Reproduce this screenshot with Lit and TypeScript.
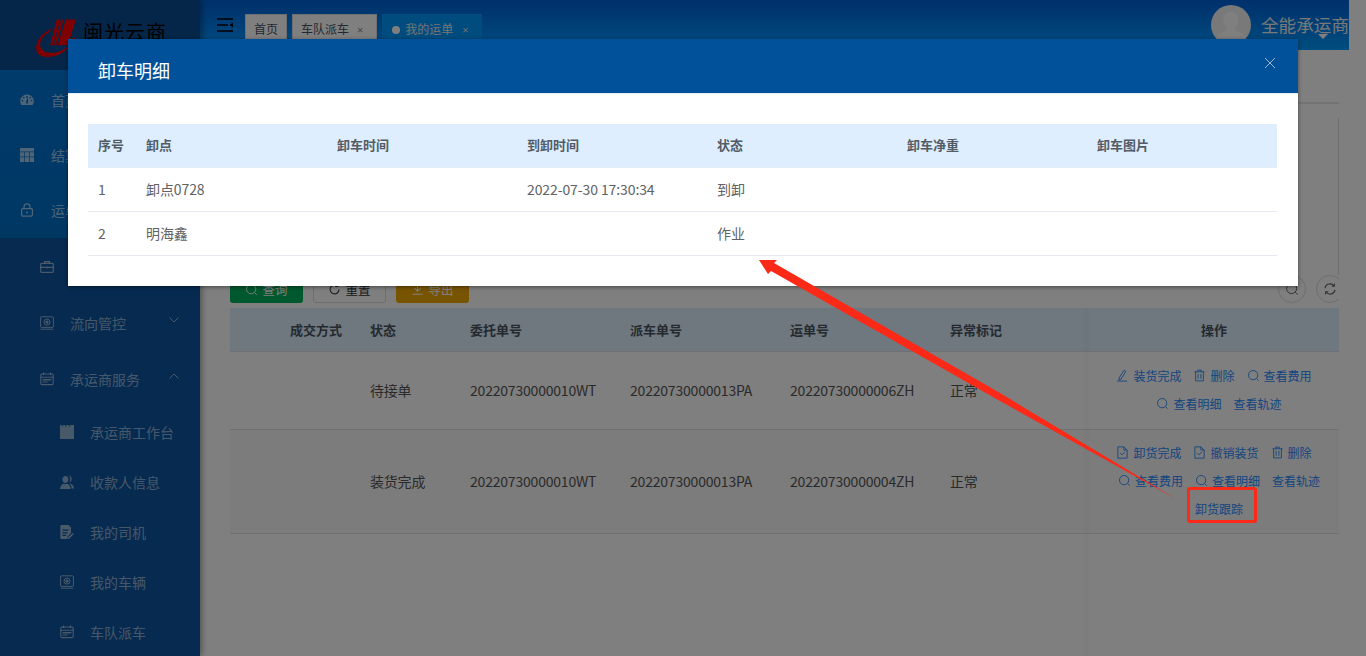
import { LitElement, css, html, svg, type TemplateResult } from "lit";
import { customElement } from "lit/decorators.js";

const icons: Record<string, TemplateResult> = {
  gauge: svg`<path fill="currentColor" d="M7 1.5a6.8 6.8 0 0 0-6.8 6.8c0 1.5.4 2.7 1.2 3.7h11.2c.8-1 1.2-2.2 1.2-3.7A6.8 6.8 0 0 0 7 1.5zm-4.6 7a.9.9 0 1 1 0-1.8.9.9 0 0 1 0 1.8zm1.4-3a.9.9 0 1 1 0-1.8.9.9 0 0 1 0 1.8zM7 3.1a.9.9 0 1 1 0 1.8.9.9 0 0 1 0-1.8zm1 7.4H6l.4-3 1.6-3 .2 3.4zm2.2-5a.9.9 0 1 1 0-1.8.9.9 0 0 1 0 1.8zm1.4 3a.9.9 0 1 1 0-1.8.9.9 0 0 1 0 1.8z"/>`,
  grid: svg`<path fill="currentColor" d="M0 0h14v3.400H0zM0 4.200h4.200v4.300H0zM4.900 4.200h4.200v4.300H4.900zM9.800 4.200H14v4.300H9.800zM0 9.300h4.200V14H0zM4.900 9.300h4.200V14H4.900zM9.800 9.300H14V14H9.800z"/>`,
  lock: svg`<g fill="none" stroke="currentColor" stroke-width="1.2"><rect x="1.6" y="5.6" width="10.8" height="7.6" rx="1.2"/><path d="M4 5.6V3.8a3 3 0 0 1 6 0v1.8"/></g><circle cx="7" cy="9.4" r="1" fill="currentColor"/>`,
  case: svg`<g fill="none" stroke="currentColor" stroke-width="1.2"><rect x=".7" y="3.4" width="12.6" height="9" rx=".8"/><path d="M4.6 3.4V1.6h4.8v1.8M.7 7.4h12.6M7 6.4v2.2"/></g>`,
  safe: svg`<g fill="none" stroke="currentColor" stroke-width="1"><rect x=".6" y=".8" width="12.8" height="10.6" rx="1"/><path d="M.6 13.2h12.8"/><circle cx="7" cy="6.1" r="3"/></g><circle cx="7" cy="6.1" r="1.6" fill="currentColor"/>`,
  card: svg`<g fill="none" stroke="currentColor" stroke-width="1.1"><rect x=".8" y="2" width="12.4" height="10.6" rx="1.2"/><path d="M.8 5.2h12.4M3.6.6v2.4M10.4.6v2.4"/></g><path fill="currentColor" d="M2.6 7h8.8v1.4H2.6zM2.6 9.4h5v1.2h-5z"/>`,
  note: svg`<path fill="currentColor" d="M0 0h1.800v1.600h1V0h2.500v1.600h1V0h2.500v1.600h1V0H14v14H0z"/>`,
  users: svg`<path fill="currentColor" d="M5.400 1c1.700 0 3 1.500 3 3.500S7.100 8 5.400 8 2.400 6.500 2.400 4.500 3.700 1 5.400 1zM0 14c0-3 2-4.800 3.800-5.200.9.600 2.300.6 3.200 0 1.800.4 3.600 2.200 3.600 5.200zM8.600.600c1.700 0 3 1.500 3 3.500 0 1.600-.9 3-2.100 3.300.4-.8.700-1.800.7-2.900 0-1.500-.5-2.900-1.600-3.900zM9 8.300c2.400.2 5 2 5 5.200h-2.400c0-2-1-3.900-2.600-5.200z"/>`,
  doc: svg`<path fill="currentColor" d="M1.500 0h7L11 2.500V8L7.600 11.500 7.300 14H1.500A1.200 1.200 0 0 1 .3 12.800V1.200A1.200 1.200 0 0 1 1.500 0zm1 4.500v1.200h6V4.500zm0 2.700v1.200h5V7.200zm0 2.600V11h3.500V9.800z"/><path fill="currentColor" d="M12.600 7.900l1.200 1.200-4.600 4.600-1.600.3.400-1.500z"/>`,
  edit: svg`<g fill="none" stroke="currentColor" stroke-width="1"><path d="M3.400 9.600 8.600 1.400l2 1.200-5.200 8.400-2.200.9zM1 13h11"/></g>`,
  trash: svg`<g fill="none" stroke="currentColor" stroke-width="1"><path d="M1.500 3h11M5 3V1.200h4V3M2.800 3v9.800h8.400V3M5.500 5.200v5.400M8.500 5.200v5.400"/></g>`,
  search: svg`<g fill="none" stroke="currentColor" stroke-width="1"><circle cx="6.600" cy="6.600" r="5"/><path d="m10.200 10.200 2.400 2.400"/></g>`,
  check: svg`<g fill="none" stroke="currentColor" stroke-width="1"><path d="M2 .9h6.500L12 4.400v8.700H2z"/><path d="M8.500.9v3.500H12M4.600 7.800l1.800 1.800 3-3.200"/></g>`,
  reset: svg`<path fill="none" stroke="currentColor" stroke-width="1.200" d="M11.800 7A4.800 4.800 0 1 1 10 3.200M10.400 1v2.600H7.800"/>`,
  refresh: svg`<path fill="none" stroke="currentColor" stroke-width="1.100" d="M2 6.200A5 5 0 0 1 11 4M12 7.800A5 5 0 0 1 3 10M11.400 1.600V4.200H8.800M2.600 12.400V9.800h2.600"/>`,
  down: svg`<path fill="none" stroke="currentColor" stroke-width="1.100" d="M7 1v7.600M3.800 5.600 7 8.800l3.200-3.200M1.500 12.200h11"/>`,
};

const icon = (name: string) => html`<svg class="ic" viewBox="0 0 14 14">${icons[name]}</svg>`;

type Op = { label: string; ic?: string };

const orders = [
  {
    status: "待接单",
    entrust: "20220730000010WT",
    dispatch: "20220730000013PA",
    waybill: "20220730000006ZH",
    flag: "正常",
    ops: [
      [
        { label: "装货完成", ic: "edit" },
        { label: "删除", ic: "trash" },
        { label: "查看费用", ic: "search" },
      ],
      [{ label: "查看明细", ic: "search" }, { label: "查看轨迹" }],
    ] as Op[][],
  },
  {
    status: "装货完成",
    entrust: "20220730000010WT",
    dispatch: "20220730000013PA",
    waybill: "20220730000004ZH",
    flag: "正常",
    ops: [
      [
        { label: "卸货完成", ic: "check" },
        { label: "撤销装货", ic: "check" },
        { label: "删除", ic: "trash" },
      ],
      [
        { label: "查看费用", ic: "search" },
        { label: "查看明细", ic: "search" },
        { label: "查看轨迹" },
      ],
      [{ label: "卸货跟踪" }],
    ] as Op[][],
  },
];

@customElement("app-root")
export class AppRoot extends LitElement {
  private navTop(ic: string, label: string) {
    return html`<div class="nav-top">${icon(ic)}<span>${label}</span></div>`;
  }

  private navSub(ic: string, label: string, arrow: string) {
    return html`<div class="nav-sub">
      ${icon(ic)}<span>${label}</span>
      ${arrow
        ? html`<svg class="chev" viewBox="0 0 10 6">
            <path d=${arrow} fill="none" stroke="currentColor" stroke-width="1" />
          </svg>`
        : ""}
    </div>`;
  }

  private navLeaf(ic: string, label: string) {
    return html`<div class="nav-leaf">${icon(ic)}<span>${label}</span></div>`;
  }

  private renderSidebar() {
    return html`<aside>
      <div class="logo">
        <svg class="mark" viewBox="0 0 50 50">
          <path fill="#f00" d="M29 6h4l-8 28h-3zM34 6h2.500l-8 28H26zM39 6h11l-9 28H30z" />
          <path fill="#f00" d="M23 16C13 21 5 30 7 40c2 8 16 9 28 2 6-4 10-8 12-13-5 7-13 12-21 13-9 1-15-2-15-9 0-5 5-11 11-14z" />
          <circle cx="48" cy="29" r="3.500" fill="#f00" />
        </svg>
        <span class="brand">闽光云商</span>
      </div>
      <div class="nav-head">
        ${this.navTop("gauge", "首页")} ${this.navTop("grid", "结算管理")}
        ${this.navTop("lock", "运单管理")}
      </div>
      <div class="nav-body">
        ${this.navSub("case", "我的运单", "")}
        ${this.navSub("safe", "流向管控", "M.5.5 5 5 9.500.5")}
        ${this.navSub("card", "承运商服务", "M.5 5.500 5 1l4.500 4.500")}
        ${this.navLeaf("note", "承运商工作台")} ${this.navLeaf("users", "收款人信息")}
        ${this.navLeaf("doc", "我的司机")} ${this.navLeaf("safe", "我的车辆")}
        ${this.navLeaf("card", "车队派车")}
      </div>
    </aside>`;
  }

  private renderTopbar() {
    return html`<header>
      <svg class="burger" viewBox="0 0 16 14">
        <path d="M0 1h16M0 7h11M0 13h16" stroke="#000" stroke-width="1.600" fill="none" />
        <path d="M16 4.500v5L12.500 7z" fill="#000" />
      </svg>
      <div class="tab">首页</div>
      <div class="tab">车队派车<span class="x">×</span></div>
      <div class="tab active"><i class="dot"></i>我的运单<span class="x">×</span></div>
      <div class="user">
        <svg class="avatar" viewBox="0 0 40 40">
          <circle cx="20" cy="20" r="20" fill="#f2f2f2" />
          <path fill="#fff" d="M20 7c4.500 0 7.500 3.500 7.500 8 0 3.500-1.500 6.500-3.500 8v2c2 2 9 3 11 8a20 20 0 0 1-30 0c2-5 9-6 11-8v-2c-2-1.500-3.500-4.500-3.500-8 0-4.500 3-8 7.500-8z" />
        </svg>
        <span class="uname">全能承运商</span>
        <i class="caret"></i>
      </div>
    </header>`;
  }

  private renderOps(lines: Op[][]) {
    return lines.map(
      (line, i) => html`<div class="op-line ${i > 0 ? "shifted" : ""}">
        ${line.map(
          (op) => html`<span class="op">${op.ic ? icon(op.ic) : ""}${op.label}</span>`,
        )}
      </div>`,
    );
  }

  private renderOrders() {
    return html`<div class="orders">
      <div class="o-row o-head">
        <div class="first">成交方式</div>
        <div>状态</div>
        <div>委托单号</div>
        <div>派车单号</div>
        <div>运单号</div>
        <div>异常标记</div>
        <div class="ops-h">操作</div>
      </div>
      ${orders.map(
        (o, i) => html`<div class="o-row body ${i === 0 ? "r1" : "r2"}">
          <div></div>
          <div>${o.status}</div>
          <div>${o.entrust}</div>
          <div>${o.dispatch}</div>
          <div>${o.waybill}</div>
          <div>${o.flag}</div>
          <div class="ops">${this.renderOps(o.ops)}</div>
        </div>`,
      )}
      <div class="shade"></div>
    </div>`;
  }

  private renderModal() {
    return html`<section class="modal">
      <div class="m-head">
        <span class="m-title">卸车明细</span>
        <svg class="close" viewBox="0 0 12 12">
          <path d="M1 1l10 10M11 1 1 11" stroke="currentColor" stroke-width="1" fill="none" />
        </svg>
      </div>
      <div class="m-body">
        <div class="m-row m-th">
          <div>序号</div>
          <div>卸点</div>
          <div>卸车时间</div>
          <div>到卸时间</div>
          <div>状态</div>
          <div>卸车净重</div>
          <div>卸车图片</div>
        </div>
        <div class="m-row">
          <div>1</div>
          <div>卸点0728</div>
          <div></div>
          <div>2022-07-30 17:30:34</div>
          <div>到卸</div>
          <div></div>
          <div></div>
        </div>
        <div class="m-row">
          <div>2</div>
          <div>明海鑫</div>
          <div></div>
          <div></div>
          <div>作业</div>
          <div></div>
          <div></div>
        </div>
      </div>
    </section>`;
  }

  render(): TemplateResult {
    return html`<div class="page">
        ${this.renderSidebar()}
        <div class="main">
          ${this.renderTopbar()}
          <div class="content">
            <div class="strip"></div>
            <div class="filter"></div>
            <div class="toolbar">
              <button class="btn green">${icon("search")}查询</button>
              <button class="btn plain">${icon("reset")}重置</button>
              <button class="btn amber">${icon("down")}导出</button>
              <span class="grow"></span>
              <button class="round">${icon("search")}</button>
              <button class="round last">${icon("refresh")}</button>
            </div>
            ${this.renderOrders()}
          </div>
        </div>
      </div>
      <div class="mask"></div>
      ${this.renderModal()}
      <svg class="callout" viewBox="0 0 1366 656">
        <path fill="#fb2a18" d="M759 260 777 260 774 263 1000 393 1176 499 1000 401 771 271 768 274z" />
      </svg>
      <div class="redbox"></div>`;
  }

  static styles = css`
    :host {
      display: block;
      position: relative;
      width: 1366px;
      height: 656px;
      overflow: hidden;
      background: #fff;
      font-family: "Noto Sans CJK SC", "Open Sans", sans-serif;
      font-size: 14px;
      letter-spacing: -0.1px;
      color: #606266;
    }

    .ic {
      width: 14px;
      height: 14px;
      flex: none;
    }

    .page {
      display: flex;
      height: 656px;
    }

    aside {
      width: 200px;
      flex: none;
      background: #0c54a0;
      box-shadow: 2px 0 6px rgba(0, 0, 0, 0.35);
      position: relative;
      font-size: 14px;
      letter-spacing: 0;
      color: rgba(255, 255, 255, 0.55);
    }

    .logo {
      height: 70px;
      background: #0a4c90;
      display: flex;
      align-items: center;
      padding-left: 30px;
      gap: 4px;
      box-sizing: border-box;
    }

    .mark {
      width: 46px;
      height: 46px;
      flex: none;
      margin-top: 3px;
    }

    .brand {
      color: #000;
      font-size: 20px;
      letter-spacing: 1px;
      margin-left: 3px;
      margin-bottom: 8px;
    }

    .nav-head {
      height: 168px;
      box-sizing: border-box;
      padding-top: 2px;
      background: linear-gradient(#0076d8, #0070c8);
      color: rgba(255, 255, 255, 0.62);
    }

    .nav-top {
      height: 55.3px;
      display: flex;
      align-items: center;
      padding-left: 20px;
      gap: 17px;
    }

    .nav-body {
      padding-top: 1px;
    }

    .nav-sub {
      height: 56px;
      display: flex;
      align-items: center;
      padding-left: 40px;
      gap: 16px;
      position: relative;
    }

    .chev {
      width: 10px;
      height: 6px;
      position: absolute;
      left: 169px;
      top: 22px;
    }

    .nav-leaf {
      height: 50px;
      display: flex;
      align-items: center;
      padding-left: 60px;
      gap: 16px;
    }

    .main {
      width: 1149px;
      flex: none;
      display: flex;
      flex-direction: column;
    }

    header {
      height: 50px;
      flex: none;
      background: linear-gradient(#0060d8, #009cff);
      display: flex;
      align-items: flex-start;
      box-sizing: border-box;
      padding: 14px 0 0 17px;
      overflow: hidden;
    }

    .burger {
      width: 16px;
      height: 14px;
      margin: 4px 12px 0 0;
      flex: none;
    }

    .tab {
      height: 36px;
      box-sizing: border-box;
      margin-right: 5px;
      padding: 0 8px;
      background: #fff;
      border: 1px solid #dcdfe6;
      font-size: 12px;
      letter-spacing: 0;
      line-height: 28px;
      color: #495060;
      white-space: nowrap;
    }

    .tab.active {
      background: #0098ff;
      border-color: #0098ff;
      color: #e8e8e8;
      padding: 0 9px;
    }

    .x {
      font-family: "Open Sans", sans-serif;
      margin-left: 8px;
      padding-right: 5px;
      font-size: 11px;
      color: #888;
    }

    .active .x {
      margin-left: 9px;
      padding-right: 3px;
      color: #ddd;
    }

    .dot {
      display: inline-block;
      width: 8px;
      height: 8px;
      border-radius: 50%;
      background: #fff;
      margin-right: 5px;
    }

    .user {
      margin-left: auto;
      position: relative;
      display: flex;
      width: 138px;
      margin-top: -9px;
      flex: none;
      white-space: nowrap;
    }

    .avatar {
      width: 40px;
      height: 40px;
      flex: none;
    }

    .uname {
      margin-left: 10px;
      font-size: 17.6px;
      letter-spacing: 0;
      line-height: 40px;
      color: #f0f0f0;
    }

    .caret {
      position: absolute;
      left: 107px;
      top: 29px;
      border: 5px solid transparent;
      border-top-color: #fff;
    }

    .content {
      flex: 1;
      min-height: 0;
      display: flex;
      flex-direction: column;
      padding: 0 10px 0 30px;
    }

    .strip {
      height: 52px;
      border-bottom: 2px solid #e6e8ec;
      margin-bottom: 14px;
      flex: none;
    }

    .filter {
      height: 157px;
      flex: none;
      border-right: 1px solid #d8dce2;
    }

    .toolbar {
      height: 28px;
      flex: none;
      display: flex;
      align-items: center;
      gap: 10px;
      margin-bottom: 5px;
      overflow: hidden;
    }

    .grow {
      flex: 1;
    }

    .btn {
      width: 73px;
      height: 28px;
      box-sizing: border-box;
      border-radius: 3px;
      border: 1px solid transparent;
      font: inherit;
      font-size: 12.5px;
      display: flex;
      align-items: center;
      justify-content: center;
      gap: 4px;
      padding: 0;
    }

    .btn .ic {
      width: 13px;
      height: 13px;
    }

    .green {
      background: #00b25c;
      color: #fff;
    }

    .plain {
      background: #fff;
      border-color: #d8dce2;
      color: #333;
    }

    .amber {
      background: #f0a800;
      color: #fff;
    }

    .round {
      width: 28px;
      height: 28px;
      flex: none;
      border-radius: 50%;
      border: 1px solid #d8dce2;
      background: #fff;
      color: #666;
      padding: 0;
      display: flex;
      align-items: center;
      justify-content: center;
    }

    .round.last {
      margin-right: -5px;
    }

    .orders {
      position: relative;
      flex: 1;
      min-height: 0;
    }

    .o-row {
      display: grid;
      grid-template-columns: 130px 100px 160px 160px 160px 149px 250px;
      border-bottom: 1px solid #dde1e6;
      box-sizing: border-box;
      color: #555;
    }

    .o-row > div {
      padding-left: 10px;
      display: flex;
      align-items: center;
    }

    .o-row.body {
      letter-spacing: -0.2px;
    }

    .o-row.body > div {
      padding-bottom: 2px;
    }

    .o-head {
      height: 44px;
      background: #deeefe;
      font-size: 13px;
      letter-spacing: 0;
      font-weight: 700;
      color: #4a5560;
    }

    .o-head .first {
      padding-left: 60px;
      white-space: nowrap;
    }

    .o-head .ops-h {
      justify-content: center;
      padding-left: 0;
    }

    .r1 {
      height: 78px;
    }

    .r2 {
      height: 104px;
      background: #f9f9f9;
    }

    .o-row.body > .ops {
      padding-left: 0;
      flex-direction: column;
      justify-content: center;
    }

    .r2.body > .ops {
      padding-bottom: 3px;
    }

    .op-line {
      height: 28px;
      display: flex;
      align-items: center;
      justify-content: center;
      gap: 12px;
      font-size: 12px;
      letter-spacing: 0;
      color: #2a8cff;
      white-space: nowrap;
    }

    .op-line.shifted {
      padding-left: 10px;
    }

    .op {
      display: flex;
      align-items: center;
      gap: 4px;
    }

    .op .ic {
      width: 13px;
      height: 13px;
    }

    .shade {
      position: absolute;
      left: 859px;
      top: 0;
      bottom: 0;
      width: 1px;
      box-shadow: -3px 0 5px rgba(0, 0, 0, 0.14);
    }

    .mask {
      position: absolute;
      inset: 0;
      background: rgba(0, 0, 0, 0.5);
    }

    .modal {
      position: absolute;
      left: 68px;
      top: 39px;
      width: 1230px;
      background: #fff;
      box-shadow: 0 1px 4px rgba(0, 0, 0, 0.45);
    }

    .m-head {
      height: 54px;
      background: #00519a;
      color: #fff;
      font-size: 18px;
      letter-spacing: 0;
      display: flex;
      align-items: center;
      justify-content: space-between;
      padding: 0 22px 0 30px;
    }

    .m-title {
      margin-top: 8px;
    }

    .close {
      width: 12px;
      height: 12px;
      color: #9db4cc;
      margin-top: -7px;
    }

    .m-body {
      padding: 30px 21px 30px 20px;
      border-top: 1px solid #e6ecf3;
    }

    .m-row {
      display: grid;
      grid-template-columns: 48px 191px 190px 190px 190px 190px 190px;
      height: 44px;
      box-sizing: border-box;
      border-bottom: 1px solid #e6e9ef;
      align-items: center;
    }

    .m-row > div {
      padding: 0 0 2px 10px;
    }

    .m-th {
      background: #deeefe;
      font-size: 13px;
      letter-spacing: 0;
      font-weight: 700;
      color: #535c66;
      border-bottom-color: #e2edf7;
    }

    .callout {
      position: absolute;
      inset: 0;
      width: 1366px;
      height: 656px;
      pointer-events: none;
    }

    .redbox {
      position: absolute;
      left: 1187px;
      top: 487px;
      width: 70px;
      height: 36px;
      box-sizing: border-box;
      border: 3px solid #fb2a18;
      border-radius: 3px;
    }
  `;
}

declare global {
  interface HTMLElementTagNameMap {
    "app-root": AppRoot;
  }
}
